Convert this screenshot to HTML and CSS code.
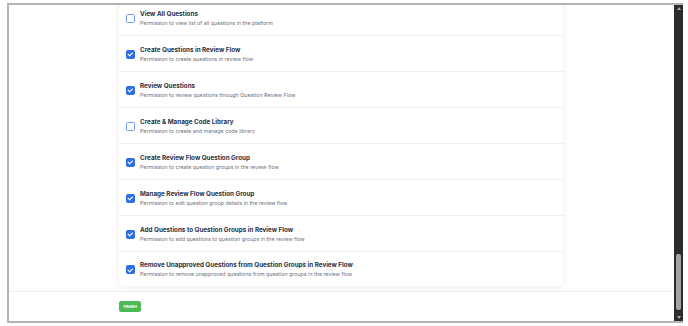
FILE: index.html
```html
<!DOCTYPE html>
<html lang="en">
<head>
<meta charset="UTF-8">
<title>Permissions</title>
<link rel="stylesheet" href="styles.css">
</head>
<body>

<div class="window">
    <div class="content">
        <div class="main">
            <div class="card">
                <div class="row">
                    <span class="check"></span>
                    <div class="text">
                        <div class="title">View All Questions</div>
                        <div class="desc">Permission to view list of all questions in the platform</div>
                    </div>
                </div>
                <div class="row">
                    <span class="check on"></span>
                    <div class="text">
                        <div class="title">Create Questions in Review Flow</div>
                        <div class="desc">Permission to create questions in review flow</div>
                    </div>
                </div>
                <div class="row">
                    <span class="check on"></span>
                    <div class="text">
                        <div class="title">Review Questions</div>
                        <div class="desc">Permission to review questions through Question Review Flow</div>
                    </div>
                </div>
                <div class="row">
                    <span class="check"></span>
                    <div class="text">
                        <div class="title">Create &amp; Manage Code Library</div>
                        <div class="desc">Permission to create and manage code library</div>
                    </div>
                </div>
                <div class="row">
                    <span class="check on"></span>
                    <div class="text">
                        <div class="title">Create Review Flow Question Group</div>
                        <div class="desc">Permission to create question groups in the review flow</div>
                    </div>
                </div>
                <div class="row">
                    <span class="check on"></span>
                    <div class="text">
                        <div class="title">Manage Review Flow Question Group</div>
                        <div class="desc">Permission to edit question group details in the review flow</div>
                    </div>
                </div>
                <div class="row">
                    <span class="check on"></span>
                    <div class="text">
                        <div class="title">Add Questions to Question Groups in Review Flow</div>
                        <div class="desc">Permission to add questions to question groups in the review flow</div>
                    </div>
                </div>
                <div class="row">
                    <span class="check on"></span>
                    <div class="text">
                        <div class="title">Remove Unapproved Questions from Question Groups in Review Flow</div>
                        <div class="desc">Permission to remove unapproved questions from question groups in the review flow</div>
                    </div>
                </div>
            </div>
        </div>
        <div class="footer">
            <button class="finish">FINISH</button>
        </div>
    </div>
    <div class="scrollbar">
        <span class="arrow up"></span>
        <span class="track"><span class="thumb"></span></span>
        <span class="arrow down"></span>
    </div>
</div>

</body>
</html>
```

FILE: styles.css
```css
body {
    margin: 0;
    background: #fff;
    font-family: Inter, "Noto Sans", sans-serif;
}

.window {
    margin: 3px 0 0 7px;
    width: 676px;
    height: 320px;
    box-sizing: border-box;
    border: 2px solid #b4b4b4;
    border-right: none;
    display: flex;
    overflow: hidden;
}

.content {
    flex: 1;
    display: flex;
    flex-direction: column;
    overflow: hidden;
}

.main {
    flex: 1;
    padding-left: 110px;
    overflow: hidden;
}

.card {
    width: 444px;
    margin-top: -5px;
    background: #fff;
    box-shadow: 0 1px 6px rgba(0,0,0,0.08);
    border-radius: 3px;
}

.row {
    height: 36px;
    display: flex;
    align-items: center;
    padding: 1px 0 0 7px;
    border-bottom: 1px solid #eeeff2;
    box-sizing: border-box;
}

.row:last-child {
    border-bottom: none;
    height: 34px;
}

/* Checkbox */
.check {
    width: 7px;
    height: 7px;
    border: 1px solid #6e9cf0;
    border-radius: 1.5px;
    background: #fff;
    margin-right: 5px;
    flex-shrink: 0;
    position: relative;
}

.check.on {
    background: #2f6fe6;
    border-color: #2f6fe6;
}

.check.on::after {
    content: "";
    position: absolute;
    left: 2.3px;
    top: 0.6px;
    width: 1.6px;
    height: 3.6px;
    border: solid #fff;
    border-width: 0 1px 1px 0;
    transform: rotate(45deg);
}

.title {
    font-size: 6.3px;
    font-weight: 700;
    color: #2b3044;
    line-height: 9px;
}

.desc {
    font-size: 5.3px;
    color: #6d7182;
    line-height: 8px;
}

/* Footer */
.footer {
    height: 29px;
    flex-shrink: 0;
    border-top: 1px solid #f0f0f0;
    box-shadow: 0 -2px 4px rgba(0,0,0,0.02);
    display: flex;
    align-items: center;
    padding-left: 110px;
}

.finish {
    background: #4cbb56;
    color: #fff;
    border: none;
    border-radius: 2px;
    font-family: Inter, sans-serif;
    font-size: 4px;
    font-weight: 700;
    padding: 0 4px;
    height: 11px;
    width: 22px;
}

/* Scrollbar */
.scrollbar {
    width: 9px;
    background: #2b2b2b;
    display: flex;
    flex-direction: column;
    align-items: center;
    padding: 2px 0;
    box-sizing: border-box;
}

.arrow {
    width: 0;
    height: 0;
    border-left: 2.5px solid transparent;
    border-right: 2.5px solid transparent;
}

.arrow.up {
    border-bottom: 3px solid #aaa;
}

.arrow.down {
    border-top: 3px solid #aaa;
}

.track {
    flex: 1;
    width: 5px;
    position: relative;
}

.thumb {
    position: absolute;
    left: 0;
    right: 0;
    bottom: 6px;
    height: 56px;
    background: #a3a3a3;
    border-radius: 2px;
}
```
